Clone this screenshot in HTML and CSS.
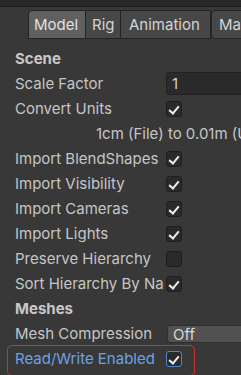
FILE: index.html
```html
<!DOCTYPE html>
<html lang="en">
<head>
  <meta charset="UTF-8" />
  <meta name="viewport" content="width=device-width, initial-scale=1.0"/>
  <title>Model Import Settings</title>
  <link rel="stylesheet" href="styles.css">
</head>
<body>
  <div class="topstrip"></div>

  <div class="tabs">
    <div class="tab active">Model</div>
    <div class="tab rig">Rig</div>
    <div class="tab anim">Animation</div>
    <div class="tab last">Materials</div>
  </div>

  <div class="inspector">
    <div class="row header">Scene</div>

    <div class="row">
      <div class="label">Scale Factor</div>
      <div class="field">1</div>
    </div>

    <div class="row">
      <div class="label">Convert Units</div>
      <div class="check on"></div>
    </div>

    <div class="row note">1cm (File) to 0.01m (Unity)</div>

    <div class="row">
      <div class="label">Import BlendShapes</div>
      <div class="check on"></div>
    </div>

    <div class="row">
      <div class="label">Import Visibility</div>
      <div class="check on"></div>
    </div>

    <div class="row">
      <div class="label">Import Cameras</div>
      <div class="check on"></div>
    </div>

    <div class="row">
      <div class="label">Import Lights</div>
      <div class="check on"></div>
    </div>

    <div class="row">
      <div class="label">Preserve Hierarchy</div>
      <div class="check"></div>
    </div>

    <div class="row">
      <div class="label">Sort Hierarchy By Name</div>
      <div class="check on"></div>
    </div>

    <div class="row header">Meshes</div>

    <div class="row">
      <div class="label">Mesh Compression</div>
      <div class="dropdown">Off</div>
    </div>

    <div class="row highlighted">
      <div class="label">Read/Write Enabled</div>
      <div class="check on blue"></div>
    </div>
  </div>
</body>
</html>
```

FILE: styles.css
```css
* {
  box-sizing: border-box;
}
body, html {
  margin: 0;
  padding: 0;
  background: #383838;
  font-family: Inter, "Noto Sans", sans-serif;
  font-size: 15px;
  color: #c6c6c6;
  height: 100vh;
  overflow: hidden;
}
.topstrip {
  height: 7px;
  background: #282828;
  border-bottom: 1px solid #1b1b1b;
}
.tabs {
  display: flex;
  padding-left: 28px;
  padding-top: 3px;
  height: 32px;
  white-space: nowrap;
}
.tab {
  height: 29px;
  line-height: 28px;
  padding-left: 8px;
  background: #474747;
  border: 1px solid #232323;
  border-left: none;
  color: #d4d4d4;
  font-size: 15px;
  flex: none;
}
.tab.active {
  width: 58px;
  padding-left: 5px;
  background: #606060;
  border-left: 1px solid #232323;
  border-radius: 4px 0 0 0;
  color: #e0e0e0;
}
.tab.rig {
  width: 35px;
  padding-left: 6px;
}
.tab.anim {
  width: 90px;
}
.tab.last {
  padding-left: 7px;
  border-left: 1px solid #232323;
  border-radius: 4px 0 0 4px;
}
.inspector {
  padding: 7px 0 0 15px;
}
.row {
  display: flex;
  align-items: center;
  height: 25px;
  white-space: nowrap;
}
.header {
  font-weight: bold;
  color: #c8c8c8;
}
.note {
  padding-left: 81px;
}
.label {
  width: 149px;
  margin-right: 2px;
  flex: none;
  overflow: hidden;
}
.field {
  flex: none;
  width: 100px;
  height: 23px;
  line-height: 21px;
  padding-left: 5px;
  background: #2a2a2a;
  border: 1px solid #212121;
  border-radius: 3px;
  color: #d2d2d2;
}
.dropdown {
  flex: none;
  width: 100px;
  height: 18px;
  line-height: 17px;
  margin-left: 1px;
  padding-left: 5px;
  background: #515151;
  border: 1px solid #303030;
  border-radius: 3px;
  color: #d8d8d8;
}
.check {
  flex: none;
  width: 16px;
  height: 16px;
  background: #2a2a2a;
  border: 1px solid #1e1e1e;
  border-radius: 3px;
  position: relative;
}
.check.on::after {
  content: "";
  position: absolute;
  left: 4px;
  top: 2px;
  width: 4px;
  height: 8px;
  border-right: 2px solid #eeeeee;
  border-bottom: 2px solid #eeeeee;
  transform: rotate(40deg);
}
.check.blue {
  border-color: #4a86cf;
}
.highlighted {
  position: relative;
  color: #6da3e6;
}
.highlighted::before {
  content: "";
  position: absolute;
  left: -8px;
  top: -1px;
  width: 186px;
  height: 29px;
  border: 1.5px solid #d23030;
  border-radius: 5px;
}
```
